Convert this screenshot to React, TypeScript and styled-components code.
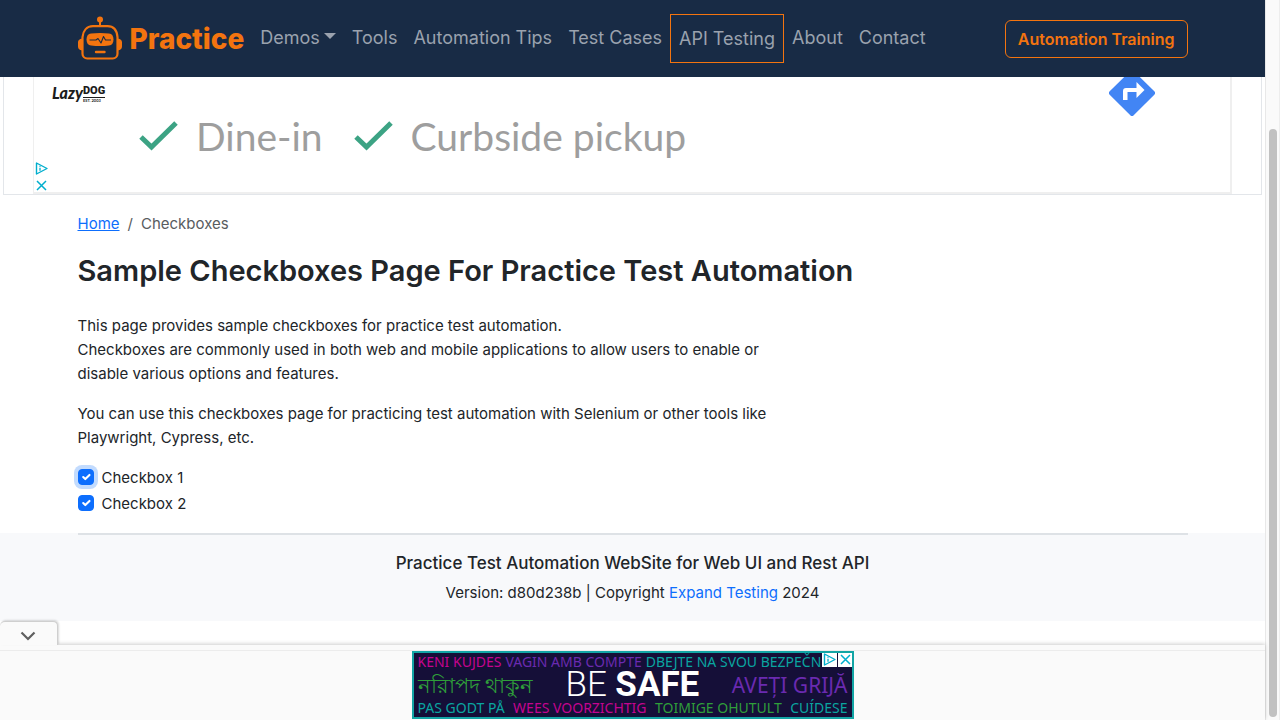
import React, { useState } from "react";
import styled, { createGlobalStyle } from "styled-components";

const GlobalStyle = createGlobalStyle`
  *, *::before, *::after { box-sizing: border-box; }
  body {
    margin: 0;
    background: #fff;
    color: #212529;
    font-family: Inter, "Liberation Sans", sans-serif;
    font-size: 15px;
    line-height: 24px;
  }
`;

const Window = styled.div`
  display: grid;
  grid-template-columns: minmax(0, 1fr) 15px;
  min-height: 100vh;
`;

const Page = styled.div`
  display: flex;
  flex-direction: column;
  min-height: 100vh;
`;

const ScrollTrack = styled.div`
  display: flex;
  flex-direction: column;
  justify-content: flex-end;
  align-items: center;
  padding-bottom: 3px;
  background: #fafafa;
  border-left: 1px solid #e8e8e8;
  border-right: 1px solid #ededed;
`;

const ScrollThumb = styled.div`
  width: 8px;
  height: 82%;
  border-radius: 4px;
  background: #c1c1c1;
`;

const Container = styled.div`
  width: 100%;
  max-width: 1140px;
  margin: 0 auto;
  padding: 0 15px;
`;

/* Header */

const Header = styled.header`
  background: #182b45;
  color: #9aa2ae;
`;

const HeaderRow = styled(Container)`
  display: flex;
  align-items: center;
  height: 77px;
`;

const Brand = styled.a`
  display: flex;
  align-items: center;
  gap: 7px;
  margin-right: 8px;
  color: #f3740f;
  font-size: 28px;
  font-weight: 800;
  line-height: 44px;
  text-decoration: none;
`;

const NavList = styled.ul`
  display: flex;
  flex: 1;
  align-items: flex-start;
  margin: 0;
  padding: 0;
  list-style: none;
`;

const NavLink = styled.a<{ $boxed?: boolean }>`
  display: flex;
  align-items: center;
  gap: 4px;
  padding: 8px;
  border: ${(p) => (p.$boxed ? "1px solid #f3740f" : "0")};
  color: inherit;
  font-size: 18px;
  line-height: 31px;
  text-decoration: none;
  white-space: nowrap;
`;

const Caret = styled.span`
  margin-bottom: 4px;
  border: 6px solid transparent;
  border-top-color: currentColor;
  border-bottom: 0;
`;

const TrainingButton = styled.button`
  padding: 6px 12px;
  border: 1px solid #f3740f;
  border-radius: 6px;
  background: transparent;
  color: #f3740f;
  font: 600 16px/24px Inter, "Liberation Sans", sans-serif;
  white-space: nowrap;
`;

/* Top advertisement */

const AdSlot = styled.aside`
  margin: 0 3px;
  padding: 0 29px;
  border: solid #e3e6ea;
  border-width: 0 1px 1px;
`;

const AdFrame = styled.div`
  position: relative;
  display: flex;
  align-items: center;
  height: 117px;
  padding: 2px 75px 0 18px;
  overflow: hidden;
  border: solid #efefef;
  border-width: 0 2px 2px 1px;
`;

const AdLogo = styled.div`
  align-self: flex-start;
  display: grid;
  grid-template-columns: auto auto;
  justify-content: start;
  width: 87px;
  padding-top: 6px;
  color: #1c1c1c;
`;

const LogoScript = styled.span`
  grid-row: span 2;
  font: italic 900 16px/16px Lato, sans-serif;
`;

const LogoWord = styled.span`
  border-bottom: 1px solid #1c1c1c;
  font: 900 11px/12px Roboto, sans-serif;
`;

const LogoNote = styled.span`
  font: 700 4px/5px Lato, sans-serif;
`;

const AdFeature = styled.span`
  display: flex;
  align-items: center;
  gap: 18px;
  margin-right: 31px;
  color: #9e9e9e;
  font: 400 39px/48px Lato, sans-serif;
  white-space: nowrap;
`;

const Directions = styled.svg`
  align-self: flex-start;
  flex: none;
  margin: -9px 0 0 auto;
`;

const AdControls = styled.div`
  position: absolute;
  left: 1px;
  bottom: 0;
  display: flex;
  flex-direction: column;
  gap: 4px;
`;

const IconButton = styled.button`
  display: flex;
  padding: 0;
  border: 0;
  background: transparent;
`;

/* Content */

const Main = styled(Container).attrs({ as: "main" })`
  padding-top: 17px;
  padding-bottom: 17px;
`;

const Breadcrumb = styled.ol`
  display: flex;
  gap: 8px;
  margin: 0 0 16px;
  padding: 0;
  color: #585c60;
  list-style: none;
`;

const HomeLink = styled.a`
  color: #0d6efd;
`;

const Title = styled.h1`
  margin: 0 0 24px;
  font-size: 29px;
  font-weight: 600;
  line-height: 38px;
`;

const Copy = styled.p`
  max-width: 730px;
  margin: 0 0 16px;
`;

const CheckRow = styled.div`
  display: flex;
  align-items: flex-start;
  gap: 8px;
  & + & { margin-top: 2px; }
`;

const CheckInput = styled.input`
  appearance: none;
  width: 16px;
  height: 16px;
  margin: 3px 0 0;
  border: 1px solid #dee2e6;
  border-radius: 4px;
  &:checked {
    border-color: #0d6efd;
    background: #0d6efd url("data:image/svg+xml,%3csvg xmlns='http://www.w3.org/2000/svg' viewBox='0 0 20 20'%3e%3cpath fill='none' stroke='%23fff' stroke-linecap='round' stroke-linejoin='round' stroke-width='3' d='m6 10 3 3 6-6'/%3e%3c/svg%3e") center / contain no-repeat;
  }
  &:focus {
    outline: 0;
    box-shadow: 0 0 0 4px rgba(13, 110, 253, 0.25);
  }
`;

/* Footer */

const Footer = styled.footer`
  padding-bottom: 16px;
  background: #f8f9fb;
  text-align: center;
`;

const Rule = styled.hr`
  height: 2px;
  margin: 0 0 16px;
  border: 0;
  background: #dee2e6;
`;

const FooterTitle = styled.h2`
  margin: 0 0 6px;
  font-size: 17px;
  font-weight: 500;
  line-height: 24px;
`;

const FooterText = styled.p`
  margin: 0;
`;

const FooterLink = styled.a`
  color: #0d6efd;
  text-decoration: none;
`;

/* Bottom anchored advertisement */

const Anchor = styled.aside`
  position: relative;
  margin-top: auto;
  padding-top: 5px;
  background: #fafafa;
  box-shadow: 0 -1px 4px rgba(0, 0, 0, 0.2);
`;

const AnchorTab = styled.button`
  position: absolute;
  bottom: 100%;
  left: 0;
  display: flex;
  align-items: center;
  justify-content: center;
  width: 58px;
  height: 24px;
  padding: 4px 2px 0 0;
  border: solid #cfcfcf;
  border-width: 1px 1px 0 0;
  border-radius: 5px 5px 0 0;
  background: #fafafa;
  box-shadow: 1px -1px 2px rgba(0, 0, 0, 0.15);
`;

const AnchorBody = styled.div`
  display: flex;
  justify-content: center;
  padding-bottom: 1px;
  border-top: 1px solid #ececec;
`;

const Banner = styled.div`
  position: relative;
  display: flex;
  flex-direction: column;
  justify-content: space-between;
  width: 442px;
  height: 68px;
  padding: 0 4px;
  overflow: hidden;
  border: 2px solid #12a5a5;
  background: #150f38;
`;

const BannerRow = styled.div<{ $start?: boolean }>`
  display: flex;
  align-items: center;
  justify-content: ${(p) => (p.$start ? "flex-start" : "space-between")};
  gap: 4px;
  font: 400 14px/18px "Noto Sans", sans-serif;
  white-space: nowrap;
`;

const Phrase = styled.span<{ $color: string; $size?: number }>`
  color: ${(p) => p.$color};
  font-size: ${(p) => p.$size ?? 14}px;
`;

const Slogan = styled.span`
  color: #fff;
  font: 300 35px/28px Roboto, sans-serif;
  & > b { font-weight: 700; }
`;

const BannerControls = styled.div`
  position: absolute;
  top: -1px;
  right: -1px;
  display: flex;
  gap: 1px;
`;

const BannerButton = styled(IconButton)`
  padding: 1px;
  background: #fff;
`;

function RobotLogo() {
  return (
    <svg width="45" height="45" viewBox="0 0 45 45" fill="none" aria-hidden="true">
      <circle cx="22" cy="3.500" r="3" fill="#f3740f" />
      <path d="M22 5v6" stroke="#f3740f" strokeWidth="2" />
      <path
        d="M15 10.200h14.500c6.500 0 9.500 5 10 11v16.500a4.800 4.800 0 0 1-4.800 4.800H9.300a4.800 4.800 0 0 1-4.800-4.800V21.200c.5-6 4-11 10.500-11z"
        stroke="#f3740f"
        strokeWidth="2.200"
      />
      <path d="M4.500 22.500C1 23 0 24.500 0 26.500v3.500c0 2.500 1 4 4.500 4.500zM39.500 22.500c3.500.5 4.500 2 4.500 4v3.500c0 2.500-1 4-4.500 4.500z" fill="#f3740f" />
      <path d="M13 17.500c6-.8 12-.8 18 0 3 .4 4.500 2.500 4.500 6s-1.500 5.600-4.500 6c-6 .8-12 .8-18 0-3-.4-4.500-2.500-4.500-6s1.500-5.600 4.500-6z" fill="#f3740f" />
      <path d="M11.500 24h6.500l2-1.500 3 4.500 2.500-6.500 2 3.500H33" stroke="#182b45" strokeWidth="1.100" strokeLinejoin="round" />
      <path d="M18 36h8.500" stroke="#f3740f" strokeWidth="2.400" strokeLinecap="round" />
    </svg>
  );
}

function CheckMark() {
  return (
    <svg width="39" height="30" viewBox="0 0 39 30" fill="none" aria-hidden="true">
      <path d="M2 16l10.500 10L37 2" stroke="#3ca384" strokeWidth="5" />
    </svg>
  );
}

function ChoicesIcon() {
  return (
    <svg width="13" height="13" viewBox="0 0 13 13" fill="none" stroke="#00aecd" aria-hidden="true">
      <path d="M1.500 1v11L12 6.500z" strokeWidth="1.400" strokeLinejoin="round" />
      <path d="M5 5.800v3M5 3.800v1" strokeWidth="1.300" />
    </svg>
  );
}

function CloseIcon() {
  return (
    <svg width="13" height="13" viewBox="0 0 13 13" stroke="#00aecd" strokeWidth="1.500" aria-hidden="true">
      <path d="M2 2l9 9M11 2l-9 9" />
    </svg>
  );
}

const links = ["Demos", "Tools", "Automation Tips", "Test Cases", "API Testing", "About", "Contact"];

export default function App() {
  const [checked, setChecked] = useState([true, true]);
  const toggle = (i: number) => setChecked((c) => c.map((v, j) => (j === i ? !v : v)));

  return (
    <Window>
      <GlobalStyle />
      <Page>
        <Header>
          <HeaderRow>
            <Brand href="#">
              <RobotLogo />
              Practice
            </Brand>
            <NavList>
              {links.map((label) => (
                <li key={label}>
                  <NavLink href="#" $boxed={label === "API Testing"}>
                    {label}
                    {label === "Demos" && <Caret />}
                  </NavLink>
                </li>
              ))}
            </NavList>
            <TrainingButton type="button">Automation Training</TrainingButton>
          </HeaderRow>
        </Header>

        <AdSlot>
          <AdFrame>
            <AdLogo>
              <LogoScript>Lazy</LogoScript>
              <LogoWord>DOG</LogoWord>
              <LogoNote>EST. 2003</LogoNote>
            </AdLogo>
            <AdFeature><CheckMark />Dine-in</AdFeature>
            <AdFeature><CheckMark />Curbside pickup</AdFeature>
            <Directions width="46" height="46" viewBox="0 0 46 46" aria-hidden="true">
              <path d="M21.300 1a2.400 2.400 0 0 1 3.400 0L45.300 21.300a2.400 2.400 0 0 1 0 3.400L24.700 45.300a2.400 2.400 0 0 1-3.400 0L.7 24.700a2.400 2.400 0 0 1 0-3.400z" fill="#4285f4" />
              <path d="M14 30v-9q0-3 3-3h10.500v-6l8 8-8 8v-6h-9v8z" fill="#fff" />
            </Directions>
            <AdControls>
              <IconButton type="button" aria-label="Ad choices"><ChoicesIcon /></IconButton>
              <IconButton type="button" aria-label="Close ad"><CloseIcon /></IconButton>
            </AdControls>
          </AdFrame>
        </AdSlot>

        <Main>
          <Breadcrumb>
            <li><HomeLink href="#">Home</HomeLink></li>
            <li aria-hidden="true">/</li>
            <li>Checkboxes</li>
          </Breadcrumb>
          <Title>Sample Checkboxes Page For Practice Test Automation</Title>
          <Copy>
            This page provides sample checkboxes for practice test automation.
            <br />
            Checkboxes are commonly used in both web and mobile applications to allow users to enable or disable
            various options and features.
          </Copy>
          <Copy>
            You can use this checkboxes page for practicing test automation with Selenium or other tools like
            Playwright, Cypress, etc.
          </Copy>
          {checked.map((value, i) => (
            <CheckRow key={i}>
              <CheckInput
                type="checkbox"
                id={`checkbox${i + 1}`}
                checked={value}
                autoFocus={i === 0}
                onChange={() => toggle(i)}
              />
              <label htmlFor={`checkbox${i + 1}`}>Checkbox {i + 1}</label>
            </CheckRow>
          ))}
        </Main>

        <Footer>
          <Container>
            <Rule />
            <FooterTitle>Practice Test Automation WebSite for Web UI and Rest API</FooterTitle>
            <FooterText>
              Version: d80d238b | Copyright <FooterLink href="#">Expand Testing</FooterLink> 2024
            </FooterText>
          </Container>
        </Footer>

        <Anchor>
          <AnchorTab type="button" aria-label="Collapse ad">
            <svg width="16" height="10" viewBox="0 0 16 10" fill="none" aria-hidden="true">
              <path d="M1.500 1.500L8 8l6.500-6.500" stroke="#5f5f5f" strokeWidth="2.200" />
            </svg>
          </AnchorTab>
          <AnchorBody>
            <Banner>
              <BannerRow $start>
                <Phrase $color="#c4048f">KENI KUJDES</Phrase>
                <Phrase $color="#6a2ab0">VAGIN AMB COMPTE</Phrase>
                <Phrase $color="#0aa5a0">DBEJTE NA SVOU BEZPEČN</Phrase>
              </BannerRow>
              <BannerRow>
                <Phrase $color="#2f9e3a" $size={21}>নরিাপদ থাকুন</Phrase>
                <Slogan>BE <b>SAFE</b></Slogan>
                <Phrase $color="#6a2ab0" $size={21}>AVEȚI GRIJĂ</Phrase>
              </BannerRow>
              <BannerRow>
                <Phrase $color="#0aa5a0">PAS GODT PÅ</Phrase>
                <Phrase $color="#c4048f">WEES VOORZICHTIG</Phrase>
                <Phrase $color="#2f9e3a">TOIMIGE OHUTULT</Phrase>
                <Phrase $color="#0aa5a0">CUÍDESE</Phrase>
              </BannerRow>
              <BannerControls>
                <BannerButton type="button" aria-label="Ad choices"><ChoicesIcon /></BannerButton>
                <BannerButton type="button" aria-label="Close ad"><CloseIcon /></BannerButton>
              </BannerControls>
            </Banner>
          </AnchorBody>
        </Anchor>
      </Page>
      <ScrollTrack>
        <ScrollThumb />
      </ScrollTrack>
    </Window>
  );
}
